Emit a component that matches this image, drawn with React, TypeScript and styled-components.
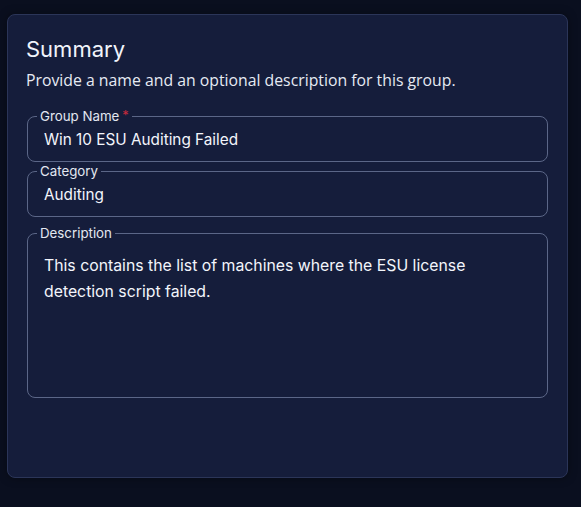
import React from 'react';
import styled, { createGlobalStyle } from 'styled-components';

const GlobalStyle = createGlobalStyle`
  html, body {
    margin: 0;
    padding: 0;
    background: #0a0f1f;
  }
  body {
    font-family: Inter, "Noto Sans", sans-serif;
    color: #eef1f8;
  }
`;

const Page = styled.div`
  padding: 14px 13px 0 7px;
  width: 581px;
  height: 507px;
  box-sizing: border-box;
`;

const Card = styled.section`
  box-sizing: border-box;
  width: 561px;
  height: 464px;
  padding: 20px 19px 0 19px;
  background: #151d3b;
  border: 1px solid #2b3558;
  border-radius: 8px;
  box-shadow: 0 0 10px rgba(0, 0, 0, 0.35);
`;

const Title = styled.h2`
  margin: 0 0 0 -1px;
  font-size: 22px;
  line-height: 28px;
  font-weight: 400;
  color: #f1f4fb;
`;

const Subtitle = styled.p`
  margin: 6px 0 17px -1px;
  font-family: "Open Sans", sans-serif;
  font-size: 15.8px;
  line-height: 22px;
  color: #e6eaf3;
`;

const Field = styled.fieldset<{ $gap?: number }>`
  margin: 0 0 ${p => p.$gap ?? 0}px;
  padding: 0 16px;
  border: 1px solid #5b6687;
  border-radius: 8px;
  min-width: 0;
`;

const Legend = styled.legend`
  height: 16px;
  margin-left: -7px;
  padding: 0 3px;
  font-size: 13.3px;
  line-height: 16px;
  color: #e3e7f1;
`;

const Required = styled.span`
  color: #c62a3c;
  font-size: 13px;
  line-height: 0;
  margin-left: 3px;
  vertical-align: 1px;
`;

const Value = styled.div`
  box-sizing: border-box;
  height: 37px;
  padding-top: 4px;
  font-size: 15.3px;
  line-height: 24px;
  color: #f3f5fb;
`;

const Area = styled.div`
  box-sizing: border-box;
  height: 156px;
  padding: 12px 60px 0 0;
  font-size: 15.8px;
  line-height: 26px;
  color: #f3f5fb;
`;

export default function App() {
  return (
    <Page>
      <GlobalStyle />
      <Card>
        <Title>Summary</Title>
        <Subtitle>Provide a name and an optional description for this group.</Subtitle>
        <Field $gap={1}>
          <Legend>
            Group Name<Required>*</Required>
          </Legend>
          <Value>Win 10 ESU Auditing Failed</Value>
        </Field>
        <Field $gap={8}>
          <Legend>Category</Legend>
          <Value>Auditing</Value>
        </Field>
        <Field>
          <Legend>Description</Legend>
          <Area>This contains the list of machines where the ESU license detection script failed.</Area>
        </Field>
      </Card>
    </Page>
  );
}
